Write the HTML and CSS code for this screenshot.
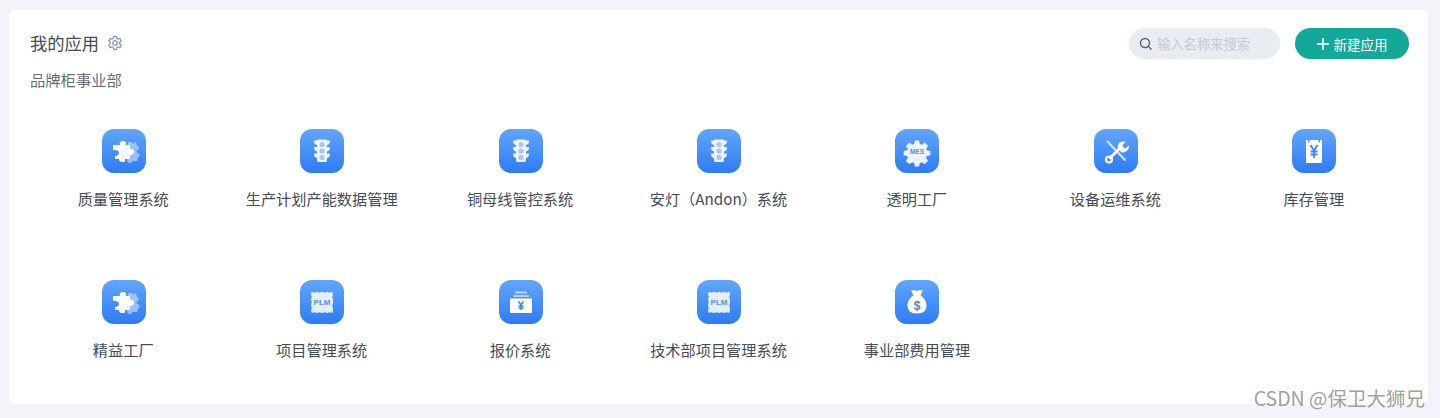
FILE: index.html
```html
<!DOCTYPE html>
<html lang="zh-CN">
<head>
    <meta charset="UTF-8">
    <title>我的应用</title>
    <link rel="stylesheet" href="styles.css">
</head>
<body>

<svg class="defs" width="0" height="0">
    <symbol id="i-puzzle" viewBox="0 0 44 44">
        <path fill="#fff" fill-opacity=".45" d="M26 13h4c0 2 3 2 3 0h1l1 4 2 1-1 3c-2 0-2 3 0 3l2 2-2 3-1 3h-4l-2 2h-3l-1-3z"/>
        <path fill="#fff" d="M15 16h3c-1-3 1-4 3-4s4 1 3 4h4v4c3-1 4 1 4 3s-2 3-4 3v4h-5c1 3-1 3-3 3s-3-1-3-3h-4v-3c2 0 4-1 4-3s-2-3-4-3h-2v-5h4z"/>
    </symbol>
    <symbol id="i-light" viewBox="0 0 44 44">
        <path fill="#fff" fill-opacity=".9" d="M18 10.500h8a1 1 0 0 1 1 1h3c0 3-1 4-3 4.500v2h3c0 3-1 4-3 4.500v2h3c0 3-1 4-3 4.500v2a2 2 0 0 1-1 2h-8a2 2 0 0 1-1-2v-2c-2-.5-3-1.500-3-4.500h3v-2c-2-.5-3-1.500-3-4.500h3v-2c-2-.5-3-1.500-3-4.500h3a1 1 0 0 1 1-1z"/>
        <circle cx="22" cy="15.500" r="2.600" fill="#a9c6f2"/>
        <circle cx="22" cy="22" r="2.600" fill="#a9c6f2"/>
        <circle cx="22" cy="28.500" r="2.600" fill="#a9c6f2"/>
    </symbol>
    <symbol id="i-mes" viewBox="0 0 44 44">
        <path fill="#fff" fill-opacity=".9" transform="translate(22 22) scale(.7) translate(-22 -22)" d="M19 7h6l1 5 3 1 4-3 5 5-3 4 1 2 5 1v6l-5 1-1 3 3 4-5 5-4-3-3 1-1 5h-6l-1-5-3-1-4 3-5-5 3-4-1-3-5-1v-6l5-1 1-2-3-4 5-5 4 3 3-1z"/>
    </symbol>
    <symbol id="i-tools" viewBox="0 0 44 44">
        <path stroke="#fff" stroke-opacity=".7" stroke-width="2.400" stroke-linecap="round" d="M13.500 12.500L31 31"/>
        <path fill="none" stroke="#fff" stroke-width="2.800" stroke-linecap="round" d="M25 20l-9 9"/>
        <circle cx="15" cy="30.500" r="3" fill="none" stroke="#fff" stroke-width="2.200"/>
        <path fill="#fff" d="M24 20c-1-4 1-7 5-7.500l2.500.5-3 3 .8 2.500 2.500.8 3-3c.8 4.500-3 8-7.500 7z"/>
    </symbol>
    <symbol id="i-note" viewBox="0 0 44 44">
        <path fill="#fff" d="M14 11h2v2.500h1.500V11h9v2.500H28V11h2v23H14z"/>
        <path fill="none" stroke="#3f86f4" stroke-width="1.800" d="M18.500 16l3.500 5.500 3.500-5.500M22 21.500V29M18.500 22.500h7M18.500 25.500h7"/>
    </symbol>
    <symbol id="i-plm" viewBox="0 0 44 44">
        <path fill="#fff" fill-opacity=".85" transform="translate(22 22) scale(.85) translate(-22 -22)" d="M10 10l3 1 3-1 3 1 3-1 3 1 3-1 3 1 3-1 1 3-1 3 1 3 0 4-1 3 1 3 0 3-1 3-3-1-3 1-3-1-3 1-3-1-3 1-3-1-3 1-1-3 1-3-1-3 1-4-1-3 1-3-1-3z"/>
    </symbol>
    <symbol id="i-box" viewBox="0 0 44 44">
        <path fill="#fff" fill-opacity=".6" d="M16 11.500h12v2H16zM14 15h16v2H14z"/>
        <path fill="#fff" d="M11 18.500h22V33H11z"/>
        <path fill="none" stroke="#3f86f4" stroke-width="1.500" d="M19.500 21.500l2.500 3.500 2.500-3.500M22 25v5M19.500 26h5M19.500 28h5"/>
    </symbol>
    <symbol id="i-bag" viewBox="0 0 44 44">
        <path fill="#fff" d="M16 10c1.500 1 2.500 0 3.500 0s1.500 1 2.500 1 1.500-1 2.500-1 2 1 3.500 0l-2.500 5.500c3.500 2 6 6 6 10 0 5-3 8-9.500 8s-9.500-3-9.500-8c0-4 2.500-8 6-10z"/>
    </symbol>
</svg>

<div class="card">
    <div class="head">
        <div class="head-title">
            <span class="title">我的应用</span>
            <svg class="gear" width="16" height="16" viewBox="0 0 16 16">
                <path d="M6.600 1.500h2.800l.4 1.800 1.200.7 1.800-.6 1.400 2.400-1.400 1.300v1.800l1.400 1.300-1.400 2.400-1.800-.6-1.200.7-.4 1.800H6.600l-.4-1.800-1.200-.7-1.800.6-1.400-2.400 1.400-1.300V7.100L1.800 5.800l1.400-2.400 1.800.6 1.200-.7z"/>
                <circle cx="8" cy="8" r="2.300"/>
            </svg>
        </div>
        <div class="head-actions">
            <div class="search">
                <svg width="14" height="14" viewBox="0 0 14 14">
                    <circle cx="6" cy="6" r="4.500"/>
                    <path d="M9.500 9.500l3 3"/>
                </svg>
                <span>输入名称来搜索</span>
            </div>
            <button class="add-btn">
                <svg width="12" height="12" viewBox="0 0 12 12"><path d="M6 0v12M0 6h12"/></svg>
                新建应用
            </button>
        </div>
    </div>
    <div class="group-name">品牌柜事业部</div>

    <div class="app-grid">
        <div class="app"><svg class="app-icon"><use href="#i-puzzle"/></svg><span>质量管理系统</span></div>
        <div class="app"><svg class="app-icon"><use href="#i-light"/></svg><span>生产计划产能数据管理</span></div>
        <div class="app"><svg class="app-icon"><use href="#i-light"/></svg><span>铜母线管控系统</span></div>
        <div class="app"><svg class="app-icon"><use href="#i-light"/></svg><span>安灯（Andon）系统</span></div>
        <div class="app"><svg class="app-icon" viewBox="0 0 44 44"><use href="#i-mes"/><text class="icon-text" x="22" y="24.500" font-size="6.500">MES</text></svg><span>透明工厂</span></div>
        <div class="app"><svg class="app-icon"><use href="#i-tools"/></svg><span>设备运维系统</span></div>
        <div class="app"><svg class="app-icon"><use href="#i-note"/></svg><span>库存管理</span></div>
        <div class="app"><svg class="app-icon"><use href="#i-puzzle"/></svg><span>精益工厂</span></div>
        <div class="app"><svg class="app-icon" viewBox="0 0 44 44"><use href="#i-plm"/><text class="icon-text" x="22" y="25" font-size="8">PLM</text></svg><span>项目管理系统</span></div>
        <div class="app"><svg class="app-icon"><use href="#i-box"/></svg><span>报价系统</span></div>
        <div class="app"><svg class="app-icon" viewBox="0 0 44 44"><use href="#i-plm"/><text class="icon-text" x="22" y="25" font-size="8">PLM</text></svg><span>技术部项目管理系统</span></div>
        <div class="app"><svg class="app-icon" viewBox="0 0 44 44"><use href="#i-bag"/><text class="icon-text icon-text-big" x="22" y="30" font-size="12">$</text></svg><span>事业部费用管理</span></div>
    </div>
</div>

<div class="watermark">CSDN @保卫大狮兄</div>

</body>
</html>
```

FILE: styles.css
```css
html, body {
    height: 100%;
}
body {
    margin: 0;
    padding: 10px 12px 14px 9px;
    box-sizing: border-box;
    background-color: #f2f4f9;
    font-family: "Noto Sans CJK SC", "Noto Sans", sans-serif;
    color: #444b5a;
    overflow: hidden;
}
.defs {
    position: absolute;
}
.card {
    height: 100%;
    box-sizing: border-box;
    padding: 18px 15px 0 15px;
    background-color: #fff;
    border-radius: 6px;
}
.head {
    display: flex;
    justify-content: space-between;
    align-items: center;
    height: 31px;
    padding: 0 4px 0 6px;
}
.head-title {
    display: flex;
    align-items: center;
    gap: 8px;
    padding-bottom: 2px;
}
.title {
    font-size: 17.300px;
}
.gear {
    fill: none;
    stroke: #8f9bb3;
    stroke-width: 1.300;
}
.head-actions {
    display: flex;
    gap: 15px;
}
/* search and button */
.search {
    display: flex;
    align-items: center;
    gap: 4px;
    width: 151px;
    height: 31px;
    box-sizing: border-box;
    padding-left: 10px;
    border-radius: 16px;
    background-color: #e9ecf0;
    color: #c4cad6;
    font-size: 13.300px;
}
.search svg {
    fill: none;
    stroke: #5c6470;
    stroke-width: 1.500;
}
.add-btn {
    display: flex;
    align-items: center;
    justify-content: center;
    gap: 5px;
    width: 114px;
    height: 31px;
    padding: 0;
    border: none;
    border-radius: 16px;
    background-color: #12a999;
    color: #fff;
    font-family: inherit;
    font-size: 13.500px;
}
.add-btn svg {
    stroke: #fff;
    stroke-width: 1.500;
}
.group-name {
    margin-top: 9px;
    padding-left: 6px;
    font-size: 15.300px;
    line-height: 22px;
    color: #656d7c;
}
/* app icons */
.app-grid {
    display: grid;
    grid-template-columns: repeat(7, 1fr);
    grid-auto-rows: 151px;
    margin-top: 39px;
}
.app {
    display: flex;
    flex-direction: column;
    align-items: center;
    gap: 14px;
    font-size: 15.200px;
    line-height: 22px;
}
.app-icon {
    width: 44px;
    height: 44px;
    margin-left: 1px;
    border-radius: 12px;
    background: linear-gradient(#62a6fb, #2e7bf4);
}
.icon-text {
    font-family: "Liberation Sans", sans-serif;
    font-weight: 700;
    fill: #5b8de0;
    text-anchor: middle;
}
.icon-text-big {
    fill: #3f86f4;
}
.watermark {
    position: absolute;
    right: 15px;
    bottom: 7px;
    font-size: 19.500px;
    line-height: 26px;
    color: #8a8a8a;
    opacity: .8;
}
```
